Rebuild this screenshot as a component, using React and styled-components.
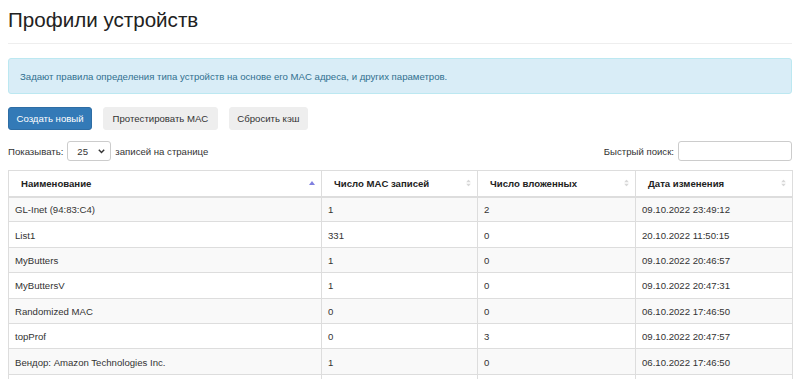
import React from "react";
import styled, { createGlobalStyle } from "styled-components";

const Global = createGlobalStyle`
  html, body { margin: 0; padding: 0; background: #fff; }
  body { font-family: "Liberation Sans", Arial, sans-serif; font-size: 9.6px; color: #333; }
  * { box-sizing: border-box; }
`;

const Page = styled.div`
  padding: 0 8px;
`;

const Title = styled.h1`
  margin: 0;
  padding-top: 6px;
  height: 44px;
  font-size: 20.6px;
  font-weight: 400;
  line-height: 28px;
  color: #222;
  border-bottom: 1px solid #eee;
`;

const Alert = styled.div`
  margin-top: 14px;
  height: 36px;
  display: flex;
  align-items: center;
  padding: 0 11px;
  background: #d9edf7;
  border: 1px solid #bce8f1;
  border-radius: 3px;
  color: #31708f;
  font-size: 9.6px;
`;

const Toolbar = styled.div`
  display: flex;
  gap: 11px;
  margin-top: 13px;
`;

const Button = styled.button`
  height: 23px;
  padding: 0 ${(p) => p.$px || 10}px;
  font-family: inherit;
  font-size: 9.6px;
  border-radius: 3px;
  border: 1px solid ${(p) => (p.$primary ? "#2e6da4" : "#eee")};
  background: ${(p) => (p.$primary ? "#337ab7" : "#eee")};
  color: ${(p) => (p.$primary ? "#fff" : "#333")};
`;

const Controls = styled.div`
  display: flex;
  justify-content: space-between;
  align-items: center;
  margin-top: 11px;
  height: 20px;
`;

const Group = styled.label`
  display: flex;
  align-items: center;
  gap: 4px;
  color: #333;
`;

const Select = styled.div`
  width: 44px;
  height: 20px;
  border: 1px solid #ccc;
  border-radius: 3px;
  display: flex;
  align-items: center;
  justify-content: space-between;
  padding: 0 5px 0 9px;
  font-size: 9.6px;
`;

const Input = styled.div`
  width: 114px;
  height: 20px;
  border: 1px solid #ccc;
  border-radius: 3px;
`;

const Table = styled.table`
  margin-top: 9px;
  width: 100%;
  border-collapse: collapse;
  table-layout: fixed;
  border: 1px solid #ddd;
`;

const Th = styled.th`
  position: relative;
  height: 26px;
  text-align: left;
  font-weight: 700;
  font-size: 9.6px;
  padding: 0 12px;
  border: 1px solid #ddd;
  border-bottom: 2px solid #ddd;
  color: #222;
`;

const SortIcon = styled.span`
  position: absolute;
  right: 6px;
  top: 50%;
  transform: translateY(-50%);
  display: flex;
  flex-direction: column;
  gap: 1px;
`;

const Tr = styled.tr`
  background: ${(p) => (p.$odd ? "#f9f9f9" : "#fff")};
`;

const Td = styled.td`
  height: 25.4px;
  padding: 1px 6px 0;
  border: 1px solid #ddd;
  font-size: 9.6px;
  color: #333;
  white-space: nowrap;
`;

const Tri = ({ up, color, w = 5, h = 3 }) => (
  <svg width={w} height={h} viewBox={`0 0 ${w} ${h}`}>
    <path d={up ? `M0 ${h} L${w / 2} 0 L${w} ${h} Z` : `M0 0 L${w / 2} ${h} L${w} 0 Z`} fill={color} />
  </svg>
);

const Sort = ({ active }) => (
  <SortIcon>
    {active ? (
      <Tri up color="#8080e0" w={6} h={4} />
    ) : (
      <>
        <Tri up color="#d8d8d8" />
        <Tri color="#d8d8d8" />
      </>
    )}
  </SortIcon>
);

const rows = [
  ["GL-Inet (94:83:C4)", "1", "2", "09.10.2022 23:49:12"],
  ["List1", "331", "0", "20.10.2022 11:50:15"],
  ["MyButters", "1", "0", "09.10.2022 20:46:57"],
  ["MyButtersV", "1", "0", "09.10.2022 20:47:31"],
  ["Randomized MAC", "0", "0", "06.10.2022 17:46:50"],
  ["topProf", "0", "3", "09.10.2022 20:47:57"],
  ["Вендор: Amazon Technologies Inc.", "1", "0", "06.10.2022 17:46:50"],
  ["", "", "", ""],
];

export default function App() {
  return (
    <>
      <Global />
      <Page>
        <Title>Профили устройств</Title>
        <Alert>
          Задают правила определения типа устройств на основе его MAC адреса, и других параметров.
        </Alert>
        <Toolbar>
          <Button $primary $px={7.5}>Создать новый</Button>
          <Button $px={8.5}>Протестировать MAC</Button>
          <Button $px={7.5}>Сбросить кэш</Button>
        </Toolbar>
        <Controls>
          <Group>
            Показывать:
            <Select>
              <span>25</span>
              <svg width="7" height="5" viewBox="0 0 7 5">
                <path d="M0.8 0.8 L3.5 3.6 L6.2 0.8" stroke="#333" strokeWidth="1.4" fill="none" />
              </svg>
            </Select>
            записей на странице
          </Group>
          <Group>
            Быстрый поиск:
            <Input />
          </Group>
        </Controls>
        <Table>
          <colgroup>
            <col style={{ width: 313 }} />
            <col style={{ width: 156 }} />
            <col style={{ width: 158 }} />
            <col style={{ width: 157 }} />
          </colgroup>
          <thead>
            <tr>
              <Th>Наименование<Sort active /></Th>
              <Th>Число MAC записей<Sort /></Th>
              <Th>Число вложенных<Sort /></Th>
              <Th>Дата изменения<Sort /></Th>
            </tr>
          </thead>
          <tbody>
            {rows.map((r, i) => (
              <Tr key={i} $odd={i % 2 === 0}>
                {r.map((c, j) => (
                  <Td key={j}>{c}</Td>
                ))}
              </Tr>
            ))}
          </tbody>
        </Table>
      </Page>
    </>
  );
}
